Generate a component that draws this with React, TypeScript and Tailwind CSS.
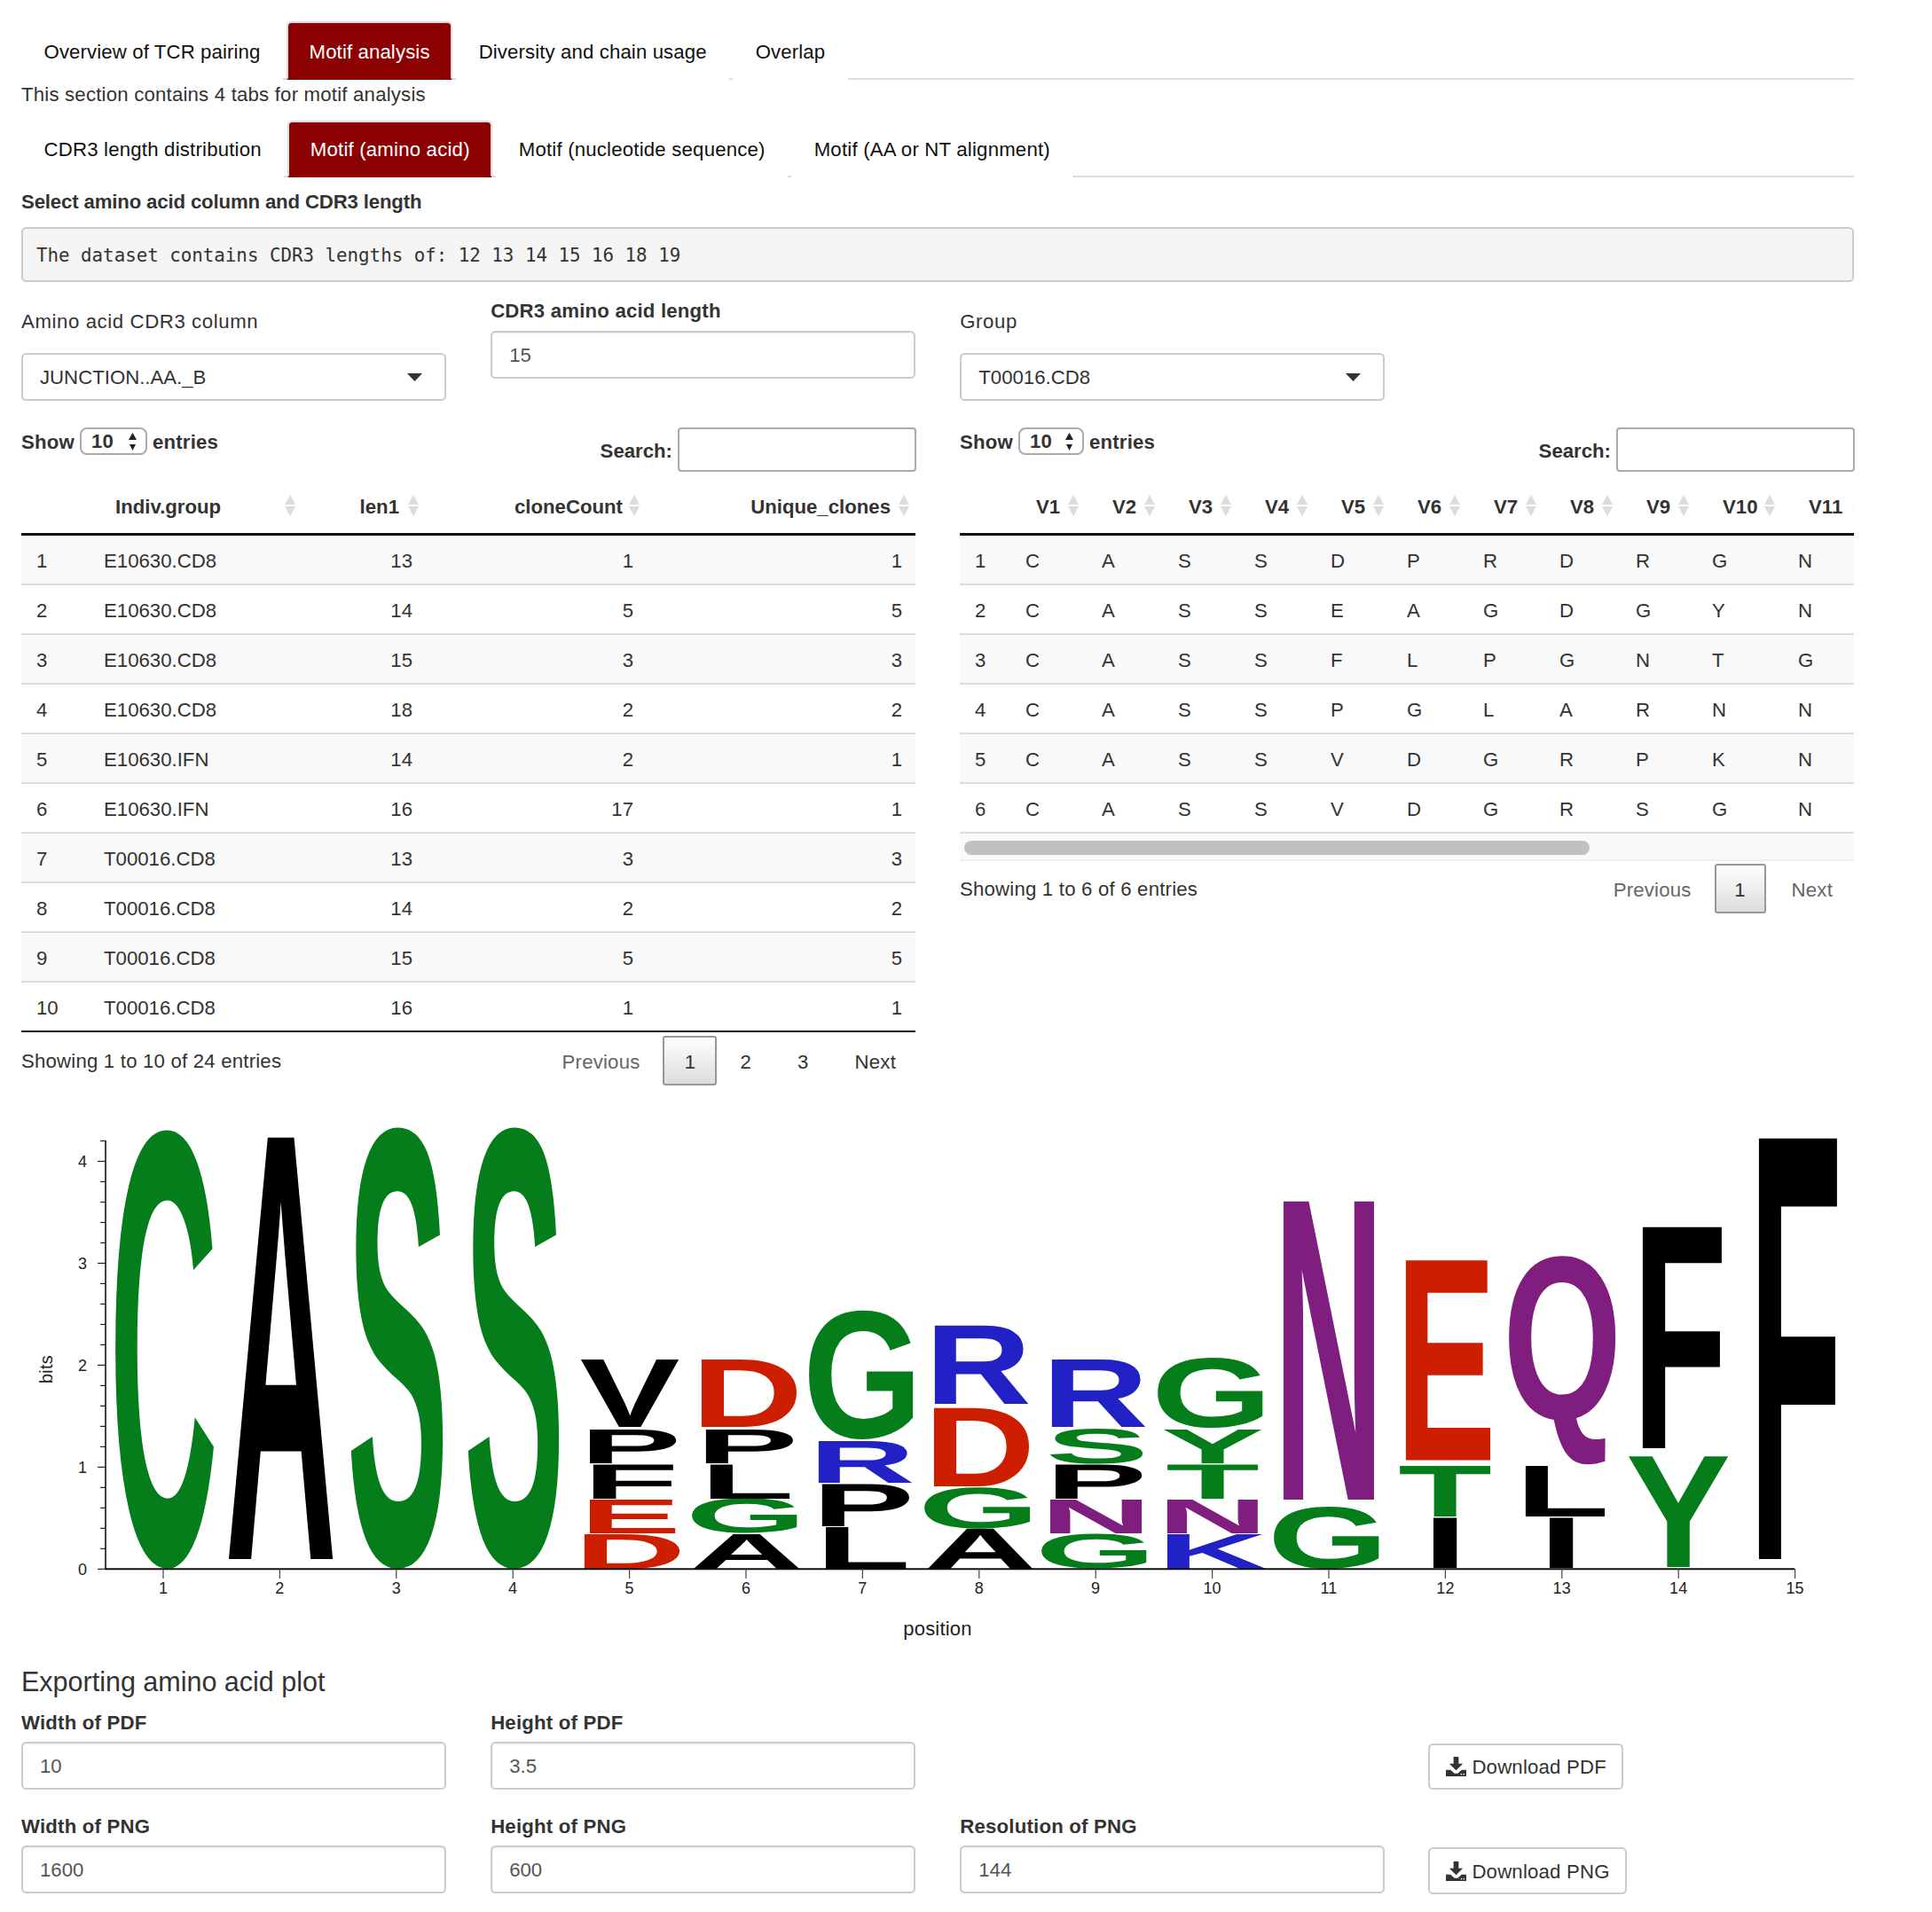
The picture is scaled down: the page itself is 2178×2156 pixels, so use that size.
import { Fragment } from "react";

const mainTabs = ["Overview of TCR pairing", "Motif analysis", "Diversity and chain usage", "Overlap"];
const subTabs = ["CDR3 length distribution", "Motif (amino acid)", "Motif (nucleotide sequence)", "Motif (AA or NT alignment)"];

const countRows: [string, number, number, number][] = [
  ["E10630.CD8", 13, 1, 1],
  ["E10630.CD8", 14, 5, 5],
  ["E10630.CD8", 15, 3, 3],
  ["E10630.CD8", 18, 2, 2],
  ["E10630.IFN", 14, 2, 1],
  ["E10630.IFN", 16, 17, 1],
  ["T00016.CD8", 13, 3, 3],
  ["T00016.CD8", 14, 2, 2],
  ["T00016.CD8", 15, 5, 5],
  ["T00016.CD8", 16, 1, 1],
];

const seqRows = ["CASSDPRDRGN", "CASSEAGDGYN", "CASSFLPGNTG", "CASSPGLARNN", "CASSVDGRPKN", "CASSVDGRSGN"];
const seqHeads = ["V1", "V2", "V3", "V4", "V5", "V6", "V7", "V8", "V9", "V10", "V11"];

const G = "#057d1b";
const R = "#ce1e00";
const B = "#2121c6";
const P = "#801e80";
const K = "#000000";

// letter, colour, x0, x1, top, bottom in page pixels
const logo: [string, string, number, number, number, number][] = [
  ["C", G, 130, 241, 1275, 1769],
  ["A", K, 258, 375, 1283, 1758],
  ["S", G, 396, 499, 1272, 1769],
  ["S", G, 528, 630, 1272, 1769],
  ["D", R, 659, 766, 1730, 1769],
  ["E", R, 665, 761, 1691, 1729],
  ["F", K, 669, 759, 1651, 1689.500],
  ["P", K, 665, 762, 1612, 1650],
  ["V", K, 655, 765, 1533, 1609],
  ["A", K, 782, 901, 1730, 1769],
  ["G", G, 780, 898, 1690, 1729],
  ["L", K, 801, 890, 1651, 1689.500],
  ["P", K, 796, 894, 1612, 1650],
  ["D", R, 791, 898, 1533, 1609],
  ["L", K, 931, 1021, 1722, 1769],
  ["P", K, 927, 1025, 1673.500, 1721],
  ["R", B, 923, 1028, 1625, 1672],
  ["G", G, 912, 1029, 1478.500, 1623.500],
  ["A", K, 1046, 1164, 1724, 1769],
  ["G", G, 1042, 1161, 1677, 1723.500],
  ["D", R, 1053, 1160, 1587.500, 1675.500],
  ["R", B, 1054, 1159, 1495, 1583],
  ["G", G, 1174, 1292, 1730, 1769],
  ["N", P, 1184, 1287, 1691, 1729],
  ["P", K, 1190, 1287, 1651, 1689.500],
  ["S", G, 1184, 1288, 1611, 1650.500],
  ["R", B, 1186, 1291, 1533, 1609],
  ["K", B, 1316, 1427, 1730, 1769],
  ["N", P, 1316, 1418, 1691, 1729],
  ["T", G, 1316, 1418, 1651, 1689.500],
  ["Y", G, 1312, 1422, 1612, 1650],
  ["G", G, 1305, 1423, 1531.500, 1610.500],
  ["G", G, 1436, 1554, 1699, 1769],
  ["N", P, 1447, 1549, 1355, 1691],
  ["I", K, 1616, 1642, 1711.500, 1768],
  ["T", G, 1578, 1680, 1652.500, 1709.500],
  ["E", R, 1585, 1680, 1421.500, 1646.500],
  ["I", K, 1747, 1773, 1711.500, 1768],
  ["L", K, 1720, 1809, 1652.500, 1709.500],
  ["Q", P, 1701, 1821, 1416.500, 1651.500],
  ["Y", G, 1836, 1948, 1642, 1766.500],
  ["F", K, 1852, 1941, 1384, 1633],
  ["F", K, 1983, 2071, 1284, 1758],
];

type Ink = { left: number; right: number; top: number; bottom: number };
const inkCache = new Map<string, Ink>();

// measureText's bounds run loose on flat letters, so read the ink off a canvas
function inkBox(ch: string): Ink {
  const hit = inkCache.get(ch);
  if (hit) return hit;
  const canvas = document.createElement("canvas");
  canvas.width = 700;
  canvas.height = 700;
  const ctx = canvas.getContext("2d", { willReadFrequently: true })!;
  ctx.font = 'bold 400px "Liberation Sans"';
  ctx.fillText(ch, 100, 500);
  const { data } = ctx.getImageData(0, 0, 700, 700);
  let left = 700;
  let right = 0;
  let top = 700;
  let bottom = 0;
  for (let y = 0; y < 700; y++) {
    for (let x = 0; x < 700; x++) {
      if (data[(y * 700 + x) * 4 + 3] > 127) {
        left = Math.min(left, x);
        right = Math.max(right, x + 1);
        top = Math.min(top, y);
        bottom = Math.max(bottom, y + 1);
      }
    }
  }
  const ink = { left: left - 100, right: right - 100, top: top - 500, bottom: bottom - 500 };
  inkCache.set(ch, ink);
  return ink;
}

function LogoLetter({ ch, fill, x0, x1, top, bottom }: { ch: string; fill: string; x0: number; x1: number; top: number; bottom: number }) {
  const ink = inkBox(ch);
  const sx = (x1 - x0) / (ink.right - ink.left);
  const sy = (bottom - top) / (ink.bottom - ink.top);
  return (
    <text
      transform={`translate(${x0 - ink.left * sx} ${top - ink.top * sy}) scale(${sx} ${sy})`}
      fontSize={400}
      fontWeight="bold"
      fontFamily="'Liberation Sans', sans-serif"
      textRendering="geometricPrecision"
      fill={fill}
    >
      {ch}
    </text>
  );
}

function LogoPlot() {
  const xTicks = Array.from({ length: 15 }, (_, i) => i);
  const yTicks = Array.from({ length: 22 }, (_, i) => i);
  return (
    <svg className="block h-[650px] w-[2066px]" viewBox="24 1224 2066 650" fontFamily="'Liberation Sans', sans-serif">
      {logo.map(([ch, fill, x0, x1, top, bottom], i) => (
        <LogoLetter key={i} ch={ch} fill={fill} x0={x0} x1={x1} top={top} bottom={bottom} />
      ))}
      <line x1="119" y1="1286" x2="119" y2="1770" stroke="#111" strokeWidth="1.6" />
      <line x1="118" y1="1769.300" x2="2023" y2="1769.300" stroke="#111" strokeWidth="2" />
      {yTicks.map((i) => {
        const y = 1769.3 - i * 22.99;
        return <line key={i} x1={i % 5 === 0 ? 110 : 113} y1={y} x2="119" y2={y} stroke="#222" strokeWidth="1.2" />;
      })}
      {[0, 1, 2, 3, 4].map((v) => (
        <text key={v} x="93" y={1769.3 - v * 114.97 + 6.5} fontSize="18" textAnchor="middle" fill="#222">
          {v}
        </text>
      ))}
      {xTicks.map((i) => {
        const x = 184 + i * 131.4;
        return (
          <Fragment key={i}>
            <line x1={x} y1="1769" x2={x} y2="1780" stroke="#444" strokeWidth="1.2" />
            <text x={x} y="1797" fontSize="18" textAnchor="middle" fill="#222">
              {i + 1}
            </text>
          </Fragment>
        );
      })}
      <text transform="translate(59 1544) rotate(-90)" fontSize="20" textAnchor="middle" fill="#222">
        bits
      </text>
      <text x="1057" y="1844" fontSize="22" textAnchor="middle" fill="#222">
        position
      </text>
    </svg>
  );
}

function TabBar({ tabs, active, size }: { tabs: string[]; active: number; size: string }) {
  return (
    <div className="flex border-b-2 border-[#ddd]">
      {tabs.map((tab, i) => (
        <div
          key={tab}
          className={
            i === active
              ? `-mb-[2px] mr-[4px] flex items-center rounded-t-[5.5px] border-2 border-[#ddd] border-b-[#8b0000] bg-[#8b0000] px-[23.5px] text-white ${size}`
              : `-mb-[2px] mr-[4px] flex items-center border-2 border-white px-[23.5px] text-[#111] ${size}`
          }
        >
          {tab}
        </div>
      ))}
    </div>
  );
}

function Caret() {
  return (
    <svg className="h-[9px] w-[17px]" viewBox="0 0 17 9">
      <polygon points="0,0 17,0 8.5,9" fill="#333" />
    </svg>
  );
}

function SelectBox({ value }: { value: string }) {
  return (
    <div className="flex h-[54px] items-center justify-between rounded-[5.5px] border-2 border-[#ccc] pl-[19px] pr-[25px] tracking-normal text-[#333]">
      <span className="pt-[2px]">{value}</span>
      <Caret />
    </div>
  );
}

function TextInput({ value }: { value: string }) {
  return (
    <input
      readOnly
      value={value}
      className="block h-[54px] w-full rounded-[5.5px] border-2 border-[#ccc] px-[19px] pt-[2px] tracking-normal text-[#555] shadow-[inset_0_1px_2px_rgba(0,0,0,0.08)]"
    />
  );
}

function SortIcon({ right }: { right: number }) {
  return (
    <svg className="absolute top-[26px] h-[24px] w-[12px]" style={{ right }} viewBox="0 0 12 24">
      <polygon points="6,0 12,11 0,11" fill="#dcdcdc" />
      <polygon points="6,24 12,13 0,13" fill="#dcdcdc" />
    </svg>
  );
}

function LengthMenu({ width }: { width: number }) {
  return (
    <div className="flex items-start gap-[6px] font-bold text-[#333]">
      <span className="leading-[33px]">Show</span>
      <span
        className="flex h-[31px] items-center justify-between rounded-[8px] border-2 border-[#aaa] pl-[11px] pr-[9px] font-normal"
        style={{ width }}
      >
        <span className="font-bold">10</span>
        <svg className="h-[20px] w-[11px]" viewBox="0 0 11 20">
          <polygon points="5.5,0 10,8 1,8" fill="#222" />
          <polygon points="5.5,20 9,13 2,13" fill="#222" />
        </svg>
      </span>
      <span className="leading-[33px]">entries</span>
    </div>
  );
}

function TableControls({ menuWidth }: { menuWidth: number }) {
  return (
    <div className="flex h-[50px] items-start justify-between">
      <LengthMenu width={menuWidth} />
      <div className="-mr-[1px] flex items-center gap-[6px] font-bold tracking-normal text-[#333]">
        <span className="pt-[4px]">Search:</span>
        <input readOnly className="h-[50px] w-[269px] rounded-[4px] border-2 border-[#aaa]" />
      </div>
    </div>
  );
}

function Pager({ pages, next, btnWidth }: { pages: number[]; next: string; btnWidth: string }) {
  return (
    <div className="flex items-center">
      <span className="px-[26px] pt-[3px] text-[#666]">Previous</span>
      {pages.map((p) =>
        p === 1 ? (
          <span
            key={p}
            className={`flex h-[56px] items-center justify-center rounded-[3px] border-2 border-[#979797] bg-linear-to-b from-white to-[#dcdcdc] pt-[3px] text-[#333] ${btnWidth}`}
          >
            {p}
          </span>
        ) : (
          <span key={p} className="px-[26px] pt-[3px] text-[#333]">
            {p}
          </span>
        ),
      )}
      <span className={`pt-[3px] ${next}`}>Next</span>
    </div>
  );
}

function CountTable() {
  return (
    <table className="w-[1008px] table-fixed border-separate border-spacing-0 tracking-normal">
      <colgroup>
        <col className="w-[76px]" />
        <col className="w-[245px]" />
        <col className="w-[136px]" />
        <col className="w-[248px]" />
        <col className="w-[303px]" />
      </colgroup>
      <thead>
        <tr className="font-bold text-[#333]">
          <th className="h-[72px] border-b-[3px] border-[#111]" />
          <th className="relative border-b-[3px] border-[#111] pl-[30px] pt-[10px] text-left">
            Indiv.group
            <SortIcon right={12} />
          </th>
          <th className="relative border-b-[3px] border-[#111] pr-[31px] pt-[10px] text-right">
            len1
            <SortIcon right={9} />
          </th>
          <th className="relative border-b-[3px] border-[#111] pr-[27px] pt-[10px] text-right">
            cloneCount
            <SortIcon right={8} />
          </th>
          <th className="relative border-b-[3px] border-[#111] pr-[28px] pt-[10px] text-right">
            Unique_clones
            <SortIcon right={7} />
          </th>
        </tr>
      </thead>
      <tbody>
        {countRows.map(([group, len, count, uniq], i) => {
          const cell = `h-[56px] border-b-2 ${i === 9 ? "border-[#111]" : "border-[#ddd]"} ${i % 2 === 0 ? "bg-[#f9f9f9]" : "bg-white"} pl-[17px] pt-[3px]`;
          return (
            <tr key={i} className="text-[#333]">
              <td className={cell}>{i + 1}</td>
              <td className={cell}>{group}</td>
              <td className={`${cell} pr-[16px] text-right`}>{len}</td>
              <td className={`${cell} pr-[15px] text-right`}>{count}</td>
              <td className={`${cell} pr-[15px] text-right`}>{uniq}</td>
            </tr>
          );
        })}
      </tbody>
    </table>
  );
}

function SeqTable() {
  return (
    <div className="w-[1008px] overflow-hidden">
      <table className="w-[1028px] table-fixed border-separate border-spacing-0 tracking-normal">
        <colgroup>
          <col className="w-[57px]" />
          {seqHeads.slice(0, 9).map((h) => (
            <col key={h} className="w-[86px]" />
          ))}
          <col className="w-[97px]" />
          <col className="w-[100px]" />
        </colgroup>
        <thead>
          <tr className="font-bold text-[#333]">
            <th className="h-[72px] border-b-[3px] border-[#111]" />
            {seqHeads.map((h) => (
              <th key={h} className="relative border-b-[3px] border-[#111] pl-[29px] pt-[10px] text-left">
                {h}
                <SortIcon right={9} />
              </th>
            ))}
          </tr>
        </thead>
        <tbody>
          {seqRows.map((row, i) => {
            const cell = `h-[56px] border-b-2 border-[#ddd] ${i % 2 === 0 ? "bg-[#f9f9f9]" : "bg-white"} px-[17px] pt-[3px]`;
            return (
              <tr key={row + i} className="text-[#333]">
                <td className={cell}>{i + 1}</td>
                {row.split("").map((c, j) => (
                  <td key={j} className={cell}>
                    {c}
                  </td>
                ))}
              </tr>
            );
          })}
        </tbody>
      </table>
    </div>
  );
}

function DownloadIcon() {
  return (
    <svg className="h-[22px] w-[23px]" viewBox="0 0 24 23">
      <path d="M9 0h6v8h5l-8 8-8-8h5z" fill="#333" />
      <path d="M0 15.5h5.5l4.5 4h4l4.500-4H24V23H0z" fill="#333" />
      <rect x="17.500" y="19.800" width="1.500" height="1.500" fill="#fff" />
      <rect x="20.500" y="19.800" width="1.500" height="1.500" fill="#fff" />
    </svg>
  );
}

function DownloadButton({ label, width, height }: { label: string; width: number; height: number }) {
  return (
    <div
      className="-ml-[1px] flex items-center gap-[6px] rounded-[5.5px] border-2 border-[#ccc] pl-[18px] text-[#333]"
      style={{ width, height }}
    >
      <DownloadIcon />
      <span className="pt-[2px]">{label}</span>
    </div>
  );
}

function Field({ label, value }: { label: string; value: string }) {
  return (
    <div>
      <div className="mb-[5px] pt-[1px] font-bold leading-[32px] text-[#333]">{label}</div>
      <TextInput value={value} />
    </div>
  );
}

export default function App() {
  return (
    <div className="w-[2178px] bg-white pb-[19px] pl-[24px] pr-[88px] pt-[24px] font-['Liberation_Sans',sans-serif] text-[22.2px] leading-[32px] tracking-[0.2px] text-[#333]">
      <TabBar tabs={mainTabs} active={1} size="h-[66px] pt-[3px] tracking-[0.12px]" />
      <p className="mb-[13px] mt-[1px]">This section contains 4 tabs for motif analysis</p>
      <TabBar tabs={subTabs} active={1} size="h-[64px] pt-[1.5px]" />
      <div className="mb-[12px] mt-[12px] font-bold tracking-[-0.15px]">Select amino acid column and CDR3 length</div>
      <pre className="h-[62px] rounded-[5.5px] border-2 border-[#ccc] bg-[#f5f5f5] px-[15px] pt-[15px] font-['DejaVu_Sans_Mono',monospace] text-[20.8px] leading-[30px] tracking-normal text-[#333]">
        The dataset contains CDR3 lengths of: 12 13 14 15 16 18 19
      </pre>

      <div className="grid w-[2066px] grid-cols-4 gap-x-[50.5px]">
        <div className="pt-[29px]">
          <div className="mb-[19px] tracking-[0.6px]">Amino acid CDR3 column</div>
          <SelectBox value="JUNCTION..AA._B" />
        </div>
        <div className="pt-[17px]">
          <div className="mb-[6px] font-bold">CDR3 amino acid length</div>
          <TextInput value="15" />
        </div>
        <div className="pt-[29px]">
          <div className="mb-[19px] tracking-[0.6px]">Group</div>
          <SelectBox value="T00016.CD8" />
        </div>
      </div>

      <div className="mt-[30px] grid w-[2066px] grid-cols-2 gap-x-[50px]">
        <div>
          <TableControls menuWidth={76} />
          <CountTable />
          <div className="flex items-start justify-between pt-[4px]">
            <span className="pt-[13px]">Showing 1 to 10 of 24 entries</span>
            <Pager pages={[1, 2, 3]} next="pl-[26px] pr-[22px] text-[#333]" btnWidth="w-[61px]" />
          </div>
        </div>
        <div>
          <TableControls menuWidth={74} />
          <SeqTable />
          <div className="mt-[2px] h-[29px] border-b-2 border-[#eee] bg-[#fafafa] pl-[5px] pt-[6px]">
            <div className="h-[16px] w-[705px] rounded-[8px] bg-[#c1c1c1]" />
          </div>
          <div className="flex items-start justify-between pt-[3px]">
            <span className="pt-[13px]">Showing 1 to 6 of 6 entries</span>
            <Pager pages={[1]} next="pl-[29px] pr-[24px] text-[#666]" btnWidth="w-[58px]" />
          </div>
        </div>
      </div>

      <LogoPlot />

      <h4 className="text-[30.5px] leading-[44px] tracking-normal text-[#333]">Exporting amino acid plot</h4>
      <div className="mt-[8px] grid w-[2066px] grid-cols-4 gap-x-[50.5px] gap-y-[25px]">
        <Field label="Width of PDF" value="10" />
        <Field label="Height of PDF" value="3.5" />
        <div />
        <div className="pt-[40px]">
          <DownloadButton label="Download PDF" width={220} height={52} />
        </div>
        <Field label="Width of PNG" value="1600" />
        <Field label="Height of PNG" value="600" />
        <Field label="Resolution of PNG" value="144" />
        <div className="pt-[40px]">
          <DownloadButton label="Download PNG" width={224} height={53} />
        </div>
      </div>
    </div>
  );
}
